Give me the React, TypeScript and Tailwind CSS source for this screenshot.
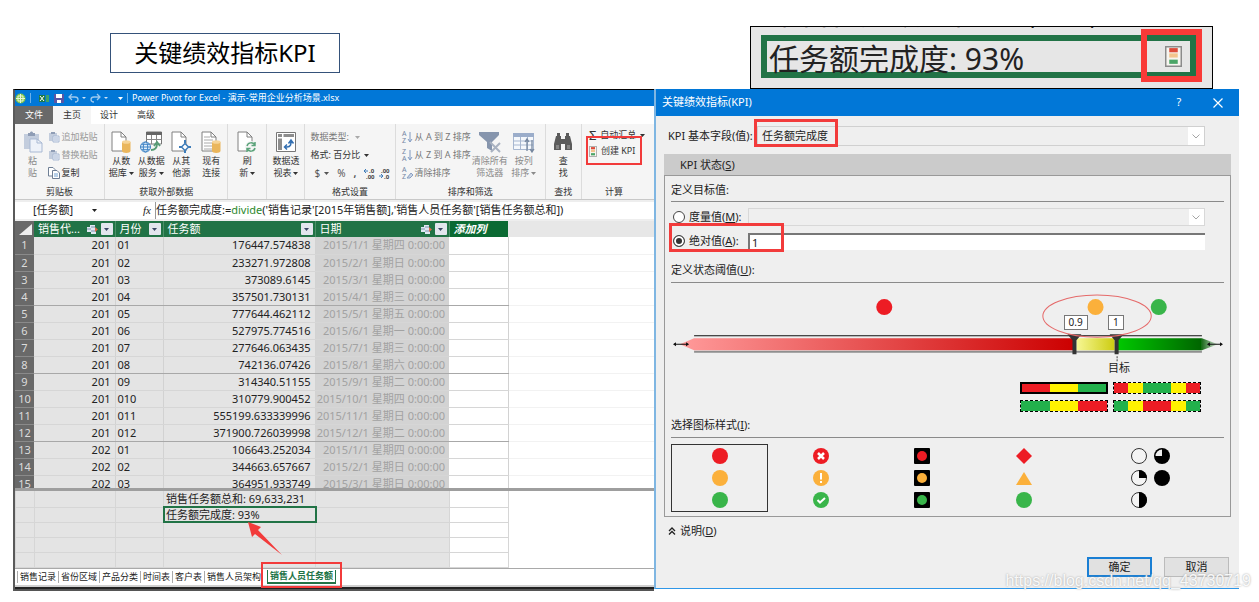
import React from 'react';

const rows = [
  ['201', '01', '176447.574838', '2015/1/1 星期四 0:00:00'],
  ['201', '02', '233271.972808', '2015/2/1 星期日 0:00:00'],
  ['201', '03', '373089.6145', '2015/3/1 星期日 0:00:00'],
  ['201', '04', '357501.730131', '2015/4/1 星期三 0:00:00'],
  ['201', '05', '777644.462112', '2015/5/1 星期五 0:00:00'],
  ['201', '06', '527975.774516', '2015/6/1 星期一 0:00:00'],
  ['201', '07', '277646.063435', '2015/7/1 星期三 0:00:00'],
  ['201', '08', '742136.07426', '2015/8/1 星期六 0:00:00'],
  ['201', '09', '314340.51155', '2015/9/1 星期二 0:00:00'],
  ['201', '010', '310779.900452', '2015/10/1 星期四 0:00:00'],
  ['201', '011', '555199.633339996', '2015/11/1 星期日 0:00:00'],
  ['201', '012', '371900.726039998', '2015/12/1 星期二 0:00:00'],
  ['202', '01', '106643.252034', '2015/1/1 星期四 0:00:00'],
  ['202', '02', '344663.657667', '2015/2/1 星期日 0:00:00'],
  ['202', '03', '364951.933749', '2015/3/1 星期日 0:00:00'],
];

const measures = ['销售任务额总和: 69,633,231', '任务额完成度: 93%', '', '', ''];

const sheets = ['销售记录', '省份区域', '产品分类', '时间表', '客户表', '销售人员架构'];

/* ---------- icons ---------- */

function Caret({ className = '' }: { className?: string }) {
  return (
    <svg viewBox="0 0 5 3" className={`inline-block h-[3px] w-[5px] shrink-0 ${className}`} fill="currentColor">
      <path d="M0 0h5L2.5 3z" />
    </svg>
  );
}

function Chevron() {
  return (
    <svg viewBox="0 0 8 5" className="h-[5px] w-2" fill="none" stroke="#a5a5a5">
      <path d="M.5.5 4 4 7.5.5" />
    </svg>
  );
}

function Page({ children }: { children?: React.ReactNode }) {
  return (
    <svg viewBox="0 0 20 22" className="h-[22px] w-5 shrink-0" fill="none">
      <path d="M1 1h9l5 5v14H1z" fill="#fff" stroke="#808080" />
      <path d="M10 1v5h5" stroke="#808080" />
      {children}
    </svg>
  );
}

function Cylinder() {
  return (
    <g>
      <path d="M11 11v9c0 2.600 8.500 2.600 8.500 0v-9z" fill="#eab65c" />
      <ellipse cx="15.250" cy="11" rx="4.250" ry="1.800" fill="#f6d497" />
    </g>
  );
}

function PasteIcon() {
  return (
    <svg viewBox="0 0 20 22" className="h-[22px] w-5 shrink-0" fill="none">
      <path d="M1 3h15v15H1z" fill="#c3cddd" />
      <path d="M5 3V2h2c0-2 3-2 3 0h2v3H5z" fill="#8f9db5" />
      <path d="M7 8h7l5 4v9H7z" fill="#eef2f9" stroke="#a9b9d3" />
      <path d="M14 8v4h5" stroke="#a9b9d3" />
    </svg>
  );
}

function SmallPaste() {
  return (
    <svg viewBox="0 0 12 12" className="h-3 w-3 shrink-0" fill="none">
      <path d="M1 2h8v8H1z" fill="#c3cddd" />
      <path d="M3 1h4v2H3z" fill="#8f9db5" />
      <path d="M5 5h6v6H5z" fill="#eef2f9" stroke="#a9b9d3" />
      <path d="M6 7h4M6 9h4" stroke="#a9b9d3" />
    </svg>
  );
}

function CopyIcon() {
  return (
    <svg viewBox="0 0 12 12" className="h-3 w-3 shrink-0" fill="#fff" stroke="#6f7f95">
      <path d="M.5.500h4.500l2 2V9H.500z" />
      <path d="M4.500 3.500H9l2.500 2.500v5.500h-7z" />
      <path d="M6 7h4M6 9h4" stroke="#6f9fd0" />
    </svg>
  );
}

function ServiceIcon() {
  return (
    <svg viewBox="0 0 24 22" className="h-[22px] w-6 shrink-0" fill="none">
      <path d="M7.500 1h15v12h-15z" fill="#fff" stroke="#777" />
      <path d="M7 1h16v3H7z" fill="#666" />
      <path d="M7.500 8.500h15M12.500 4v9M17.500 4v9" stroke="#888" />
      <circle cx="6.500" cy="16" r="5" fill="#e3f0fb" stroke="#3f83c5" />
      <ellipse cx="6.500" cy="16" rx="2.200" ry="5" stroke="#3f83c5" />
      <path d="M1.500 16h10M2.500 13.300h8M2.500 18.700h8" stroke="#3f83c5" />
      <path d="M12 19c4 0 6-2 6-6m-3 2 3-4 3 4" stroke="#559b74" strokeWidth="1.800" />
    </svg>
  );
}

function PivotIcon() {
  return (
    <svg viewBox="0 0 20 22" className="h-[22px] w-5 shrink-0" fill="none">
      <path d="M.500 1.500h19v19H.500z" fill="#fff" stroke="#777" />
      <path d="M2 3h4v3H2zM7.500 3H18v3H7.500zM2 7.500h4V19H2z" fill="#8d8d8d" />
      <path d="M9 16h2c4 0 4-3 4-6m-2.500 2.500L15 9l2.500 3.500M11 13.500 8.500 16l2.500 2.500" stroke="#3470b2" strokeWidth="1.500" />
    </svg>
  );
}

function ClearFilterIcon() {
  return (
    <svg viewBox="0 0 22 22" className="h-[22px] w-[22px] shrink-0">
      <path d="M0 1h20v3l-7 7v9l-5-3v-6L0 4z" fill="#8695ad" />
      <path d="m11 11 10 10m0-9-9 9" stroke="#a9b2c1" strokeWidth="2" />
    </svg>
  );
}

function SortColumnIcon() {
  return (
    <svg viewBox="0 0 22 22" className="h-[22px] w-[22px] shrink-0" fill="none">
      <path d="M.500 2.500h20v16H.500z" fill="#f5f8fc" stroke="#a7b7d0" />
      <path d="M0 2h21v4H0z" fill="#9badca" />
      <path d="M.500 10h20M.500 14h20M7.500 6v12M14.500 6v12" stroke="#a7b7d0" />
      <path d="M14 20V9m-2 2 2-3 2 3M19 9v11m-2-2 2 3 2-3" stroke="#76879f" strokeWidth="1.300" />
    </svg>
  );
}

function BinocularsIcon() {
  return (
    <svg viewBox="0 0 20 22" className="h-[22px] w-5 shrink-0" fill="#5b5b5b">
      <path d="M4 2h3v3h1v3h4V5h1V2h3v3h1l2 8v6h-7v-6h-4v6H1v-6l2-8h1z" />
      <path d="M3 14h3v4H3zM14 14h3v4h-3z" fill="#858585" />
    </svg>
  );
}

function SortIcon({ first, second }: { first: string; second: string }) {
  return (
    <svg viewBox="0 0 11 12" className="h-3 w-[11px] shrink-0 overflow-visible" fill="none">
      <text x="0" y="5" fontSize="7" fill="#7486a4">{first}</text>
      <text x="0" y="12" fontSize="7" fill="#7486a4">{second || 'Z'}</text>
      {second ? <path d="M8 1v9M6 8l2 3 2-3" stroke="#7f99c2" /> : <path d="m5 11 4-5 2 2-3 3z" fill="#c6d3e6" stroke="#8aa0c2" />}
    </svg>
  );
}

function KpiIcon({ className }: { className: string }) {
  return (
    <svg viewBox="0 0 16 20" className={`shrink-0 ${className}`} preserveAspectRatio="none">
      <path d="M.700.700h14.600v18.600H.700z" fill="#f7f5f0" stroke="#8b8b8b" strokeWidth="1.400" />
      <path d="M4 2h8v4H4z" fill="#dd4b39" />
      <path d="M4 7h8v4H4z" fill="#f3c48d" />
      <path d="M4 13h8v4H4z" fill="#4ba567" />
    </svg>
  );
}

function RelationIcon() {
  return (
    <svg viewBox="0 0 13 11" className="h-[11px] w-[13px] shrink-0">
      <path d="M1 3h5v5H1zM4 1h5v4H4zM5 5h5v5H5z" fill="#dfe8f2" />
      <path d="M1 5h4M5 3h4M5 7h5" stroke="#8094ae" />
      <path d="m9 3 3 2.500L9 8z" fill="#d9694b" />
    </svg>
  );
}

/* ---------- ribbon ---------- */

function BigButton({ icon, top, bottom, caret, muted }: { icon: React.ReactNode; top: string; bottom: string; caret?: boolean; muted?: boolean }) {
  return (
    <button className={`flex w-[30px] shrink-0 flex-col items-center pt-[7px] leading-3 ${muted ? 'text-[#8a8a8a]' : ''}`}>
      {icon}
      <span className="mt-0.5">{top}</span>
      <span className="flex items-center gap-0.5">
        {bottom}
        {caret && <Caret />}
      </span>
    </button>
  );
}

function Group({ title, children, noLine }: { title: string; children: React.ReactNode; noLine?: boolean }) {
  return (
    <div className={`flex flex-col ${noLine ? 'pr-2' : 'border-r border-[#dcdcdc]'}`}>
      <div className="flex flex-1 justify-center">{children}</div>
      <div className="pb-px text-center leading-3">{title}</div>
    </div>
  );
}

function Ribbon() {
  return (
    <div className="grid h-[76px] grid-cols-[minmax(0,90fr)_minmax(0,123fr)_minmax(0,39fr)_minmax(0,38fr)_minmax(0,90fr)_minmax(0,150fr)_minmax(0,36fr)_minmax(0,72fr)] border-b border-[#c8c8c8] bg-[#f5f5f5] text-[#333]">
      <Group title="剪贴板">
        <BigButton icon={<PasteIcon />} top="粘" bottom="贴" muted />
        <div className="flex flex-col pt-1 pr-1">
          <button className="flex h-[18px] items-center gap-0.5 text-[#999]"><SmallPaste />追加粘贴</button>
          <button className="flex h-[18px] items-center gap-0.5 text-[#999]"><SmallPaste />替换粘贴</button>
          <button className="flex h-[18px] items-center gap-0.5"><CopyIcon />复制</button>
        </div>
      </Group>
      <Group title="获取外部数据">
        <BigButton icon={<Page><Cylinder /></Page>} top="从数" bottom="据库" caret />
        <BigButton icon={<ServiceIcon />} top="从数据" bottom="服务" caret />
        <BigButton
          icon={
            <Page>
              <path d="M14 9v3m0 7v3M8 16h3m6 0h3" stroke="#3f7db9" strokeWidth="2" />
              <path d="m14 12.500 3.500 3.500-3.500 3.500-3.500-3.500z" fill="#fff" stroke="#3f7db9" strokeWidth="1.500" />
            </Page>
          }
          top="从其"
          bottom="他源"
        />
        <BigButton icon={<Page><path d="M3 6h6M3 9h9M3 12h8M3 15h8M3 18h8" stroke="#aaa" /><Cylinder /></Page>} top="现有" bottom="连接" />
      </Group>
      <Group title="">
        <BigButton
          icon={
            <Page>
              <circle cx="14" cy="16" r="6" fill="#f5f5f5" />
              <path d="M10 15c1-4 6-4 8-1m0-3v3.500h-3.500M18 17c-1 4-6 4-8 1m0 3v-3.500h3.500" stroke="#5ba37a" strokeWidth="1.500" />
            </Page>
          }
          top="刷"
          bottom="新"
          caret
        />
      </Group>
      <Group title="">
        <BigButton icon={<PivotIcon />} top="数据透" bottom="视表" caret />
      </Group>
      <Group title="格式设置">
        <div className="flex w-full flex-col pt-1 pl-[5px]">
          <span className="flex h-[18px] items-center gap-1.5 text-[#777]">数据类型: <Caret className="opacity-60" /></span>
          <span className="flex h-[18px] items-center gap-1">格式: 百分比 <Caret /></span>
          <div className="flex h-[18px] items-center gap-2 pl-1 text-[10px] text-[#555]">
            <button className="flex items-center gap-1">$ <Caret /></button>
            <button>%</button>
            <button className="font-bold">,</button>
            <svg viewBox="0 0 28 11" className="h-[11px] w-7 overflow-visible" fontSize="6" fontWeight="bold" fill="#444">
              <path d="M0 3h4M2 1 0 3l2 2M15 8h4m-2-2 2 2-2 2" stroke="#3f7db9" fill="none" />
              <text x="5" y="5">.0</text>
              <text x="2" y="11">.00</text>
              <text x="17" y="5">.00</text>
              <text x="20" y="11">.0</text>
            </svg>
          </div>
        </div>
      </Group>
      <Group title="排序和筛选">
        <div className="flex flex-col pt-1 pr-1 text-[#777]">
          <button className="flex h-[18px] items-center gap-0.5"><SortIcon first="A" second="Z" />从 A 到 Z 排序</button>
          <button className="flex h-[18px] items-center gap-0.5"><SortIcon first="Z" second="A" />从 Z 到 A 排序</button>
          <button className="flex h-[18px] items-center gap-0.5"><SortIcon first="A" second="" />清除排序</button>
        </div>
        <BigButton icon={<ClearFilterIcon />} top="清除所有" bottom="筛选器" muted />
        <span className="w-1" />
        <BigButton icon={<SortColumnIcon />} top="按列" bottom="排序" caret muted />
      </Group>
      <Group title="查找">
        <BigButton icon={<BinocularsIcon />} top="查" bottom="找" />
      </Group>
      <Group title="计算" noLine>
        <div className="relative flex w-full flex-col pt-[3px] pl-[7px]">
          <button className="flex h-4 items-center gap-1"><span className="text-[13px] leading-none">Σ</span>自动汇总 <Caret /></button>
          <button className="flex h-4 items-center gap-1"><KpiIcon className="h-[11px] w-2" />创建 KPI</button>
          <div className="pointer-events-none absolute top-3 left-1 h-[29px] w-14 border-2 border-[#f23b3b]" />
        </div>
      </Group>
    </div>
  );
}

/* ---------- data grid ---------- */

function Columns() {
  return (
    <colgroup>
      <col className="w-[19px]" />
      <col className="w-[81px]" />
      <col className="w-12" />
      <col className="w-[152px]" />
      <col className="w-[134px]" />
      <col className="w-[59px]" />
      <col />
    </colgroup>
  );
}

function HeadCell({ label, relation }: { label: string; relation?: boolean }) {
  return (
    <th className="border-r border-[#4c9069] bg-[#217346] p-0 font-normal text-white">
      <div className="flex h-4 items-center gap-0.5 pr-0.5 pl-1">
        <span className="flex-1 text-left">{label}</span>
        {relation && <RelationIcon />}
        <button aria-label={`筛选 ${label}`} className="flex h-3 w-3 items-center justify-center rounded-[1px] bg-[#e3e6ee] text-[#3a4664]">
          <Caret />
        </button>
      </div>
    </th>
  );
}

function DataGrid() {
  return (
    <div className="h-[267px] overflow-hidden">
      <table className="w-full table-fixed border-collapse text-[11px] leading-4 whitespace-nowrap text-[#222]">
        <Columns />
        <thead>
          <tr className="h-4">
            <th className="bg-[#696969] p-0">
              <svg viewBox="0 0 19 15" className="h-[15px] w-[19px]" fill="#eee"><path d="M17 2v11H4z" /></svg>
            </th>
            <HeadCell label="销售代..." relation />
            <HeadCell label="月份" />
            <HeadCell label="任务额" />
            <HeadCell label="日期" relation />
            <th className="bg-[#0b6a33] p-0 pl-1 text-left font-bold text-white italic">添加列</th>
            <th className="bg-[#e7e7e7] p-0" />
          </tr>
        </thead>
        <tbody>
          {rows.map(([agent, month, amount, date], i) => {
            const line = i % 4 === 3 ? 'border-b border-b-[#a8a8a8]' : 'border-b border-b-[#d6d6d6]';
            return (
              <tr key={i} className="h-[17px]">
                <th className="border-b border-b-[#8a8a8a] bg-[#696969] p-0 text-center font-normal text-[#dcdcdc]">{i + 1}</th>
                <td className={`border-r border-r-[#d2d2d2] bg-[#e4e4e4] p-0 pr-1 text-right ${line}`}>{agent}</td>
                <td className={`border-r border-r-[#d2d2d2] bg-[#e4e4e4] p-0 pl-0.5 ${line}`}>{month}</td>
                <td className={`border-r border-r-[#d2d2d2] bg-[#e4e4e4] p-0 pr-1 text-right ${line}`}>{amount}</td>
                <td className={`bg-[#d3d3d3] p-0 pr-1 text-right text-[#a2a2a2] ${line}`}>{date}</td>
                <td className={`border-r border-r-[#d2d2d2] bg-white p-0 ${line}`} />
                <td className="border-b border-b-[#f2f2f2] bg-white p-0" />
              </tr>
            );
          })}
        </tbody>
      </table>
    </div>
  );
}

function MeasureGrid() {
  return (
    <div className="relative border-t-[3px] border-[#9e9e9e]">
      <table className="w-full table-fixed border-collapse text-[11px] leading-[14px] whitespace-nowrap text-[#222]">
        <Columns />
        <tbody>
          {measures.map((text, i) => (
            <tr key={i} className={i === 0 ? 'h-4' : 'h-[15px]'}>
              <td className="border border-t-0 border-[#d6d6d6] bg-[#e4e4e4] p-0" />
              <td className="border border-t-0 border-[#d6d6d6] bg-[#e4e4e4] p-0" />
              <td className="border border-t-0 border-[#d6d6d6] bg-[#e4e4e4] p-0" />
              <td className={`border border-t-0 border-[#d6d6d6] bg-[#e4e4e4] p-0 pl-0.5 ${i === 1 ? 'outline-2 -outline-offset-1 outline-[#217346]' : ''}`}>{text}</td>
              <td className="border border-t-0 border-[#d6d6d6] bg-[#e4e4e4] p-0" />
              <td className="border border-t-0 border-[#d6d6d6] bg-white p-0" />
              <td className="bg-white p-0" />
            </tr>
          ))}
        </tbody>
      </table>
      {/* arrow pointing at the KPI measure */}
      <svg viewBox="0 0 36 34" className="pointer-events-none absolute top-[31px] left-[232px] h-[34px] w-9" fill="#f23b3b">
        <path d="M1 0 14 5l-3 3 24 25L8 12l-3 3z" />
      </svg>
    </div>
  );
}

function PivotWindow() {
  return (
    <section className="border-t border-l-2 border-t-black border-l-[#5a5a5a] text-[9px] whitespace-nowrap">
      <div className="flex h-4 items-center gap-1 bg-[#0177d7] text-white">
        <svg viewBox="0 0 11 11" className="h-[11px] w-[11px]" fill="none">
          <circle cx="5.500" cy="5.500" r="5" fill="#83c54b" />
          <path d="M3 3h5v5H3zM1 5.500h9M5.500 1v9" stroke="#e8f6dc" />
        </svg>
        <span className="h-2.5 border-l border-[#6ab0ea]" />
        <svg viewBox="0 0 11 11" className="ml-1 h-[11px] w-[11px]">
          <path d="M0 2h6v7H0z" fill="#1f7a45" />
          <path d="m1 3 4 5m0-5L1 8" stroke="#fff" />
          <path d="M7 2h3v7H7z" fill="#3fa268" />
        </svg>
        <svg viewBox="0 0 10 11" className="h-[11px] w-2.5">
          <path d="M0 1h10v9H0z" fill="#5a55a5" />
          <path d="M2 1h6v4H2zM3 7h4v3H3z" fill="#fff" />
        </svg>
        <svg viewBox="0 0 46 10" className="h-2.5 w-[46px]" fill="none" stroke="#9cc8ee" strokeWidth="1.300">
          <path d="M4 1 1 4l3 3M1 4h6c4 0 4 5 0 5M29 1l3 3-3 3M32 4h-6c-4 0-4 5 0 5" />
          <path d="M14 4h4l-2 2zM36 4h4l-2 2z" fill="#cfe4f7" stroke="none" />
        </svg>
        <Caret />
        <span className="h-2.5 border-l border-[#6ab0ea]" />
        <span>Power Pivot for Excel - 演示-常用企业分析场景.xlsx</span>
      </div>
      <nav className="flex h-[18px] bg-white leading-[18px] text-[#333]">
        <button className="w-[38px] bg-[#696969] text-white">文件</button>
        <button className="w-[38px] bg-[#f5f5f5]">主页</button>
        <button className="w-9">设计</button>
        <button className="w-[38px]">高级</button>
      </nav>
      <Ribbon />
      <div className="flex h-[21px] items-center bg-[#eee] text-[11px] text-[#222]">
        <div className="relative flex h-[17px] w-[86px] items-center bg-white">
          <select aria-label="名称框" className="w-full appearance-none bg-transparent pl-[18px] outline-none">
            <option>[任务额]</option>
          </select>
          <Caret className="absolute right-1" />
        </div>
        <div className="flex h-[17px] flex-1 items-center bg-white">
          <span className="w-[54px] pr-1 text-right font-['Liberation_Serif',serif] italic">fx</span>
          <div role="textbox" aria-label="公式" className="flex-1 border-l border-[#999]">
            任务额完成度:=<span className="text-[#2c8a2c]">divide</span>('销售记录'[2015年销售额],'销售人员任务额'[销售任务额总和])
          </div>
        </div>
      </div>
      <DataGrid />
      <MeasureGrid />
      <div className="relative flex h-[19px] items-center border-t border-b-2 border-t-[#a9a9a9] border-b-[#d0d0d0] bg-white pl-0.5 leading-3 text-[#222]">
        {sheets.map((name) => (
          <button key={name} className="border-l border-[#aaa] px-0.5">{name}</button>
        ))}
        <div className="relative ml-1">
          <button className="border-x border-b-2 border-[#217346] px-0.5 font-bold text-[#217346]">销售人员任务额</button>
          <div className="pointer-events-none absolute -inset-x-1.5 -top-2 h-[26px] border-2 border-[#f23b3b]" />
        </div>
      </div>
      <div className="h-1 border-t-2 border-[#222] bg-[#555]" />
    </section>
  );
}

/* ---------- KPI dialog ---------- */

function Gauge() {
  return (
    <div className="relative">
      <svg viewBox="0 0 551 95" className="block w-full">
        <defs>
          <linearGradient id="red"><stop offset="0" stopColor="#ff9a9a" /><stop offset="1" stopColor="#cc0000" /></linearGradient>
          <linearGradient id="yellow"><stop offset="0" stopColor="#f7f794" /><stop offset="1" stopColor="#cccc10" /></linearGradient>
          <linearGradient id="green"><stop offset="0" stopColor="#00c800" /><stop offset="1" stopColor="#006400" /></linearGradient>
          <linearGradient id="tip"><stop offset="0" stopColor="#1c6b1c" /><stop offset="1" stopColor="#d8e4d8" /></linearGradient>
        </defs>
        <circle cx="212.500" cy="24" r="8" fill="#ed1c24" />
        <circle cx="423" cy="24" r="8" fill="#fbb03b" />
        <circle cx="486" cy="24" r="8" fill="#39b54a" />
        <path d="M23 52.500h506" stroke="#111" />
        <path d="M23 68.500h506" stroke="#8f8f8f" strokeWidth="2" />
        <path d="M23 55h379v12H23L9 61z" fill="url(#red)" />
        <path d="M404 55h38v12h-38z" fill="url(#yellow)" />
        <path d="M445 55h84v12h-84z" fill="url(#green)" />
        <path d="m529 55 16 6-16 6z" fill="url(#tip)" />
        <path d="M3 61h14M535 61h14" stroke="#111" />
        <path d="m2 61 3-2v4zM18 61l-3-2v4zM534 61l3-2v4zM550 61l-3-2v4z" fill="#111" />
        <path d="M395 51h14l-5 6v14h-4V57zM437 51h14l-5 6v14h-4V57z" fill="#333" />
        <path d="M444.500 73v5" stroke="#444" strokeDasharray="2 1" />
        <ellipse cx="424.500" cy="33" rx="54" ry="21" fill="none" stroke="#e56a6a" />
      </svg>
      <input aria-label="下限" defaultValue="0.9" className="absolute top-8 left-[71%] h-[15px] w-6 border border-[#777] bg-white text-center text-[10px] outline-none" />
      <input aria-label="目标值" defaultValue="1" className="absolute top-8 left-[79%] h-[15px] w-4 border border-[#777] bg-white text-center text-[10px] outline-none" />
      <span className="absolute top-[77px] left-[81%] -translate-x-1/2 leading-4">目标</span>
    </div>
  );
}

function Swatch({ label, active, children }: { label: string; active?: boolean; children: React.ReactNode }) {
  return (
    <button aria-label={label} className={`flex h-3 w-[88px] ${active ? 'border-2 border-black' : 'border border-dashed border-black'}`}>
      {children}
    </button>
  );
}

function Swatches() {
  return (
    <div className="flex justify-end pt-1 pr-[23px]">
      <div className="grid grid-cols-2 gap-x-[5px] gap-y-1.5">
        <Swatch label="红黄绿" active>
          <i className="h-full flex-1 bg-[#ed1c24]" /><i className="h-full flex-1 bg-[#fff200]" /><i className="h-full flex-1 bg-[#22b14c]" />
        </Swatch>
        <Swatch label="红黄绿黄红">
          <i className="h-full flex-1 bg-[#ed1c24]" /><i className="h-full flex-1 bg-[#fff200]" /><i className="h-full flex-2 bg-[#22b14c]" /><i className="h-full flex-1 bg-[#fff200]" /><i className="h-full flex-1 bg-[#ed1c24]" />
        </Swatch>
        <Swatch label="绿黄红">
          <i className="h-full flex-1 bg-[#22b14c]" /><i className="h-full flex-1 bg-[#fff200]" /><i className="h-full flex-1 bg-[#ed1c24]" />
        </Swatch>
        <Swatch label="绿黄红黄绿">
          <i className="h-full flex-1 bg-[#22b14c]" /><i className="h-full flex-1 bg-[#fff200]" /><i className="h-full flex-2 bg-[#ed1c24]" /><i className="h-full flex-1 bg-[#fff200]" /><i className="h-full flex-1 bg-[#22b14c]" />
        </Swatch>
      </div>
    </div>
  );
}

function Mark({ children }: { children: React.ReactNode }) {
  return <svg viewBox="0 0 16 16" className="h-4 w-4" fill="none">{children}</svg>;
}

function IconStyles() {
  const cell = 'flex h-full flex-col items-center justify-center gap-1.5';
  return (
    <div className="mt-1.5 grid h-[68px] grid-cols-[97fr_97fr_97fr_97fr_147fr] gap-1">
      <button aria-label="圆形" className={`${cell} border border-[#333]`}>
        <Mark><circle cx="8" cy="8" r="8" fill="#ed1c24" /></Mark>
        <Mark><circle cx="8" cy="8" r="8" fill="#fbb03b" /></Mark>
        <Mark><circle cx="8" cy="8" r="8" fill="#39b54a" /></Mark>
      </button>
      <button aria-label="符号" className={cell}>
        <Mark><circle cx="8" cy="8" r="8" fill="#ed1c24" /><path d="m5 5 6 6m0-6-6 6" stroke="#fff" strokeWidth="2.500" /></Mark>
        <Mark><circle cx="8" cy="8" r="8" fill="#fbb03b" /><path d="M8 3v6.500M8 11v2" stroke="#fff" strokeWidth="2" /></Mark>
        <Mark><circle cx="8" cy="8" r="8" fill="#39b54a" /><path d="m4.500 8 2.500 2.500L12 6" stroke="#fff" strokeWidth="2" /></Mark>
      </button>
      <button aria-label="交通灯" className={cell}>
        <Mark><rect width="16" height="16" rx="1" fill="#000" /><circle cx="8" cy="8" r="5" fill="#ed1c24" /></Mark>
        <Mark><rect width="16" height="16" rx="1" fill="#000" /><circle cx="8" cy="8" r="5" fill="#fbb03b" /></Mark>
        <Mark><rect width="16" height="16" rx="1" fill="#000" /><circle cx="8" cy="8" r="5" fill="#39b54a" /></Mark>
      </button>
      <button aria-label="形状" className={cell}>
        <Mark><path d="m8 0 8 8-8 8-8-8z" fill="#ed1c24" /></Mark>
        <Mark><path d="m8 2 8 13H0z" fill="#fbb03b" /></Mark>
        <Mark><circle cx="8" cy="8" r="8" fill="#39b54a" /></Mark>
      </button>
      <button aria-label="饼图" className="flex h-full justify-center gap-[7px]">
        <span className={cell}>
          <Mark><circle cx="8" cy="8" r="7.500" fill="#f4f4f4" stroke="#333" /></Mark>
          <Mark><circle cx="8" cy="8" r="7.500" fill="#f4f4f4" stroke="#333" /><path d="M8 0a8 8 0 0 1 8 8H8z" fill="#000" /></Mark>
          <Mark><circle cx="8" cy="8" r="7.500" fill="#f4f4f4" stroke="#333" /><path d="M8 0a8 8 0 0 1 0 16z" fill="#000" /></Mark>
        </span>
        <span className="flex h-full flex-col items-center gap-1.5 pt-1">
          <Mark><circle cx="8" cy="8" r="8" fill="#000" /><path d="M8 1.500V8H1.500A6.500 6.500 0 0 1 8 1.500z" fill="#eee" /></Mark>
          <Mark><circle cx="8" cy="8" r="8" fill="#000" /></Mark>
        </span>
      </button>
    </div>
  );
}

function KpiDialog() {
  return (
    <section className="border-b border-l-2 border-b-[#2f97e8] border-l-[#7fb6e2] bg-[#efefef] text-[11px] whitespace-nowrap text-[#222]">
      <header className="flex h-[27px] items-center bg-[#0177d7] pr-4 pl-1.5 text-white">
        <h2 className="flex-1">关键绩效指标(KPI)</h2>
        <button aria-label="帮助" className="w-10">?</button>
        <button aria-label="关闭" className="ml-3.5">
          <svg viewBox="0 0 10 10" className="h-2.5 w-2.5" stroke="#fff" strokeWidth="1.200"><path d="m.500.500 9 9m0-9-9 9" /></svg>
        </button>
      </header>
      <div className="px-2 pt-2.5 pb-[11px]">
        <div className="mr-[26px] flex h-5 items-center">
          <label htmlFor="field" className="w-[93px] pl-1">KPI 基本字段(值):</label>
          <div className="relative flex h-5 flex-1 items-center border border-[#d0d0d0]">
            <select id="field" className="h-full w-full appearance-none pl-1 outline-none"><option>任务额完成度</option></select>
            <span className="pointer-events-none absolute inset-y-0 right-0 flex w-4 items-center justify-center bg-white"><Chevron /></span>
            <div className="pointer-events-none absolute -top-2 -left-1 h-7 w-[84px] border-[3px] border-[#f23b3b]" />
          </div>
        </div>
        <div className="mt-2 h-[21px] bg-[#cbcbcb] pl-4 leading-[21px]">KPI 状态(<u>S</u>)</div>
        <div className="border border-[#999] px-1.5 pb-1">
          <div className="flex h-[26px] items-end border-b border-[#8a8a8a] pb-[3px] leading-4">定义目标值:</div>
          <div className="relative mr-[19px] space-y-1.5 pt-1.5">
            <div className="flex h-[18px] items-center">
              <label className="flex w-[77px] items-center gap-1">
                <input type="radio" name="target" className="ml-0.5 h-3 w-3 appearance-none rounded-full border border-[#444] bg-white" />
                <span>度量值(<u>M</u>):</span>
              </label>
              <div className="flex h-[18px] flex-1 items-center border border-[#d8d8d8]">
                <select aria-label="度量值" className="h-full w-full appearance-none" />
                <span className="flex h-full w-4 items-center justify-center bg-white"><Chevron /></span>
              </div>
            </div>
            <div className="flex h-[18px] items-center">
              <label className="flex w-[77px] items-center gap-1">
                <input type="radio" name="target" defaultChecked className="ml-0.5 h-3 w-3 appearance-none rounded-full border border-[#444] bg-[#333] shadow-[inset_0_0_0_2px_#fff]" />
                <span>绝对值(<u>A</u>):</span>
              </label>
              <input aria-label="绝对值" defaultValue="1" className="h-[17px] flex-1 border-t-2 border-l-2 border-[#777] bg-white pl-0.5 leading-[15px] outline-none" />
            </div>
            <div className="pointer-events-none absolute top-[21px] -left-0.5 h-[29px] w-[115px] border-[3px] border-[#f23b3b]" />
          </div>
          <div className="flex h-[27px] items-end border-b border-[#8a8a8a] pb-1 leading-4">定义状态阈值(<u>U</u>):</div>
          <Gauge />
          <Swatches />
          <div className="flex h-[26px] items-end border-b border-[#8a8a8a] pb-1 leading-4">选择图标样式(<u>I</u>):</div>
          <IconStyles />
        </div>
        <button className="mt-1.5 flex items-center gap-1 pl-1 leading-4">
          <svg viewBox="0 0 8 8" className="h-2 w-2" fill="none" stroke="#222" strokeWidth="1.300"><path d="m1 4 3-3 3 3M1 7.500l3-3 3 3" /></svg>
          <span>说明(<u>D</u>)</span>
        </button>
        <div className="mt-[18px] flex justify-end gap-3 pr-0.5">
          <button className="h-5 w-[65px] border-2 border-[#1a7fd4] bg-[#e1e1e1] leading-4">确定</button>
          <button className="h-5 w-[65px] border border-[#bbb] bg-[#e1e1e1] leading-4">取消</button>
        </div>
      </div>
    </section>
  );
}

function KpiCloseUp() {
  return (
    <div className="relative mt-[26px] mr-[26px] ml-24 h-[63px] overflow-hidden border border-black bg-[#e6e6e6] text-[30px] leading-[34px] whitespace-nowrap text-[#222]">
      <div className="flex h-2 items-end overflow-hidden pl-[19px] leading-[44px]">
        <span>销售任务额总和: 69,633,231</span>
      </div>
      <div className="mr-4 ml-2.5 flex h-[43px] items-center border-[6px] border-[#217346] pr-2 pl-0.5">
        <span className="flex-1 pt-1">任务额完成度: 93%</span>
        <KpiIcon className="h-[21px] w-[17px]" />
      </div>
      <div className="absolute top-0.5 right-2.5 h-[53px] w-[61px] border-[6px] border-[#f93a37]" />
    </div>
  );
}

export default function App() {
  return (
    <main className="relative grid grid-cols-[641fr_585fr] items-start bg-white pr-5 pb-2.5 pl-[13px] font-['Noto_Sans','Noto_Sans_CJK_SC',sans-serif]">
      <div className="min-w-0">
        <h1 className="mt-[33px] mb-4 ml-[97px] h-10 w-[230px] border border-[#35527a] text-center text-[24px] leading-[38px] text-black">关键绩效指标KPI</h1>
        <PivotWindow />
      </div>
      <div className="min-w-0">
        <KpiCloseUp />
        <KpiDialog />
      </div>
      <div className="pointer-events-none absolute right-2 bottom-2.5 font-['Liberation_Sans',sans-serif] text-[16px] leading-5 text-white/90 [text-shadow:0_0_2px_#999]">https://blog.csdn.net/qq_43730719</div>
    </main>
  );
}
